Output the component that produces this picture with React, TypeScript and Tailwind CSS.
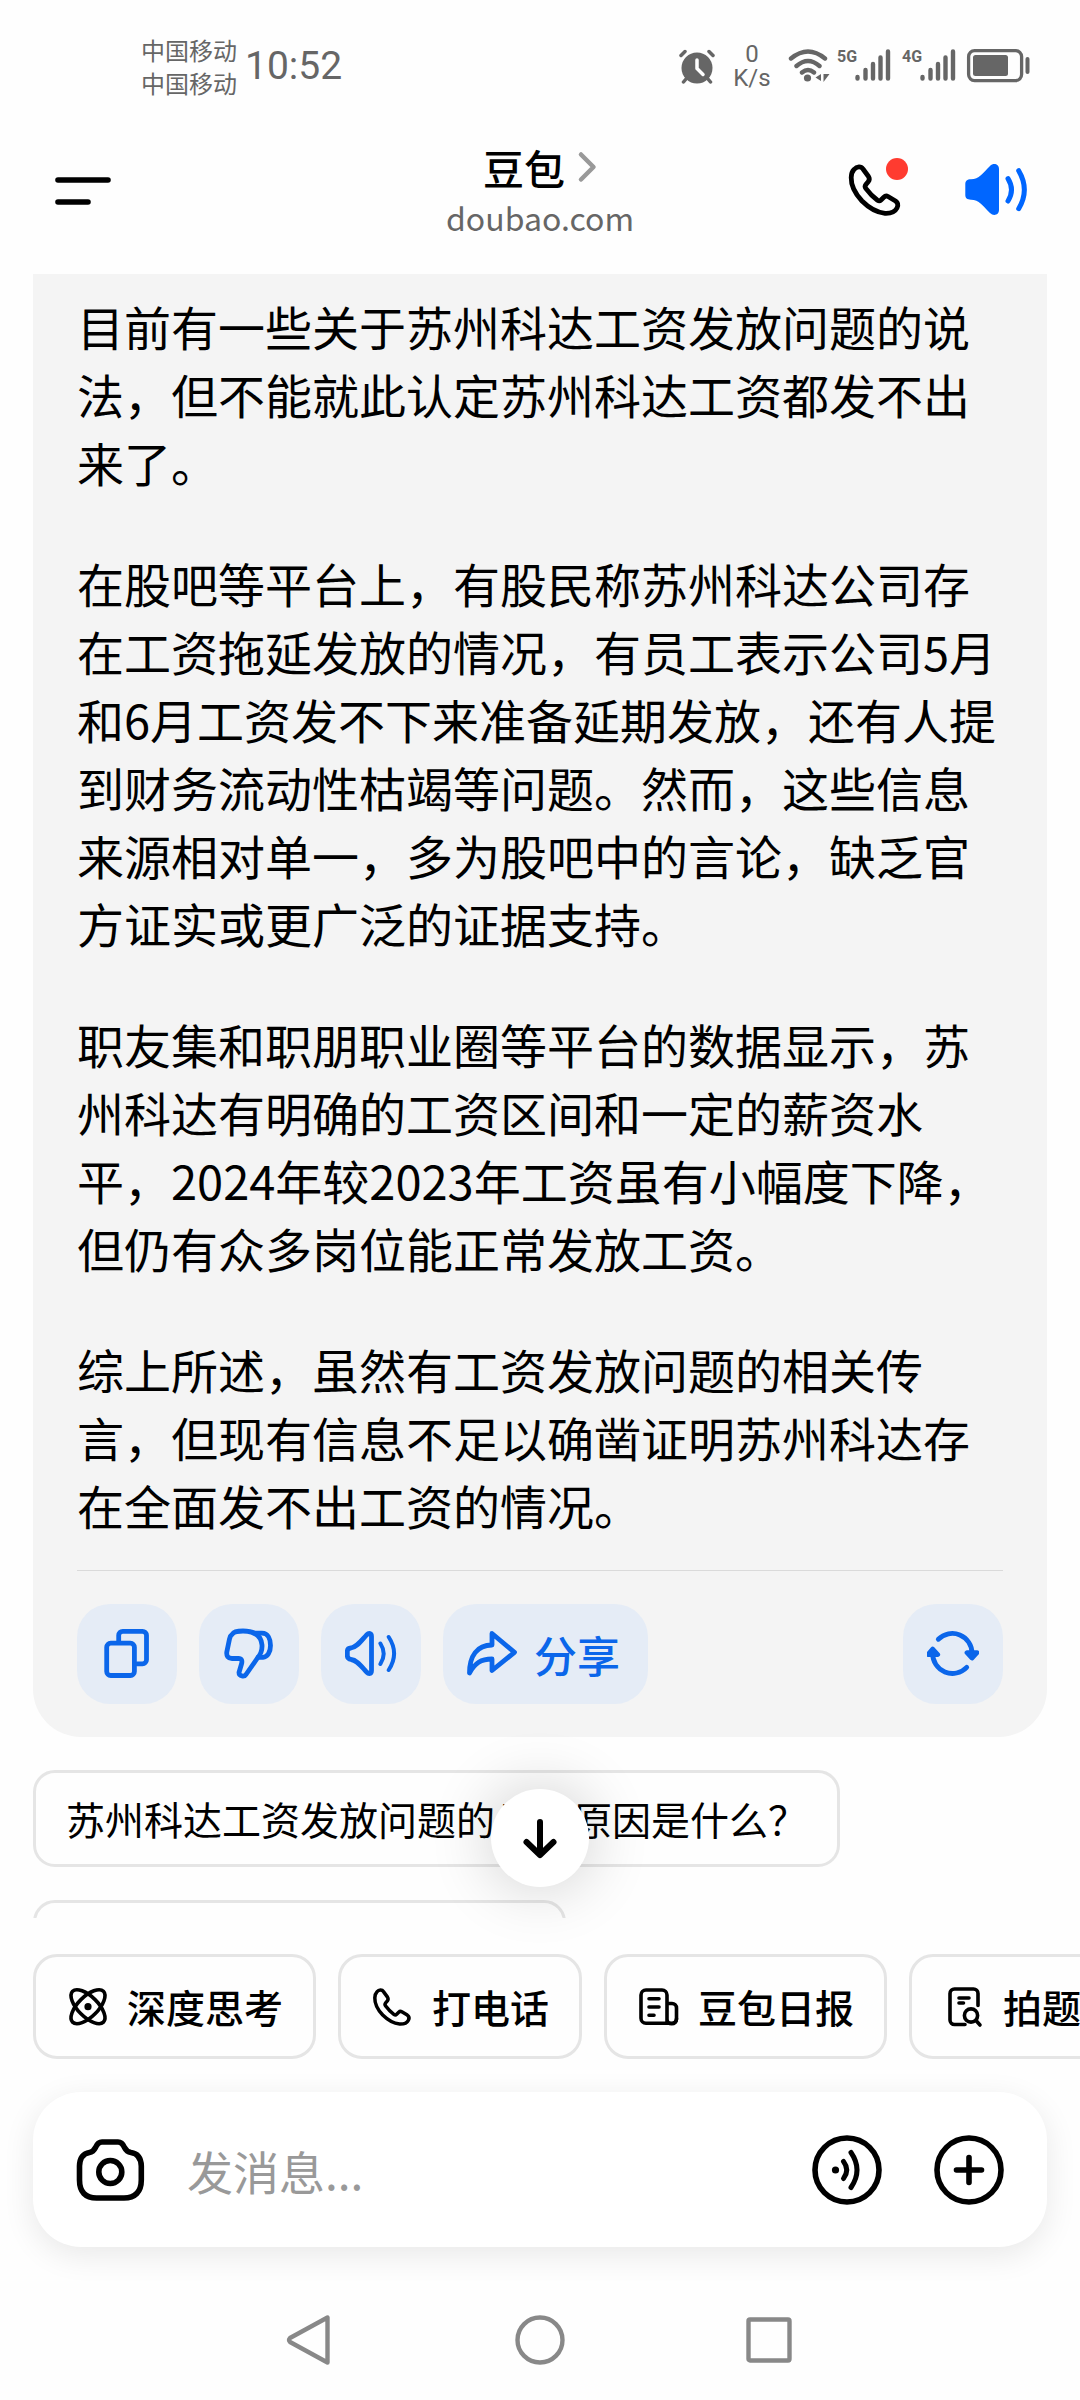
import { useState, ReactElement, ReactNode } from "react";

const paragraphs = [
  "目前有一些关于苏州科达工资发放问题的说法，但不能就此认定苏州科达工资都发不出来了。",
  "在股吧等平台上，有股民称苏州科达公司存在工资拖延发放的情况，有员工表示公司5月和6月工资发不下来准备延期发放，还有人提到财务流动性枯竭等问题。然而，这些信息来源相对单一，多为股吧中的言论，缺乏官方证实或更广泛的证据支持。",
  "职友集和职朋职业圈等平台的数据显示，苏州科达有明确的工资区间和一定的薪资水平，2024年较2023年工资虽有小幅度下降，但仍有众多岗位能正常发放工资。",
  "综上所述，虽然有工资发放问题的相关传言，但现有信息不足以确凿证明苏州科达存在全面发不出工资的情况。",
];

const stroke = {
  fill: "none",
  stroke: "currentColor",
  strokeLinecap: "round" as const,
  strokeLinejoin: "round" as const,
};

function PhoneIcon({ className }: { className: string }) {
  return (
    <svg viewBox="0 0 60 60" className={className} {...stroke} strokeWidth={4.8}>
      <path d="M8 9.5C11 6 15 6 17 9L22.5 16.5C23.8 18.5 23.5 20 22.3 21.7L20 24.3C18.8 25.8 19 27.5 20 28.7C23.5 33.5 27 37 31.5 40.3C33 41.3 34 41 35 40L37.8 37.2C39 36 40.5 35.7 42 36.5L49.5 41C52 42.8 52.3 45.5 51 48C49 52 44 53.5 39 53.3C31 52.5 23 48 16 41C9 33.5 5 25 5.2 17.5C5.3 14 6 11.5 8 9.5Z" />
    </svg>
  );
}

function SignalBars({ label }: { label: string }) {
  return (
    <div className="flex items-start">
      <span className="w-[18px] font-[Roboto] text-[16px] leading-[18px] font-bold">{label}</span>
      <svg viewBox="0 0 36 36" className="size-9" {...stroke} strokeWidth={4.4}>
        <path d="M2.5 29v1.5M10.5 22v8.5M18 16v14.5M25.5 9.5v21M33 3.5v27" />
      </svg>
    </div>
  );
}

function StatusBar() {
  return (
    <div className="flex h-[106px] items-center justify-between pt-[32px] pr-[48px] pb-[6px] pl-[141px] text-[#666]">
      <div className="flex items-center gap-2">
        <div className="text-[24px] leading-[33px]">
          <p>中国移动</p>
          <p>中国移动</p>
        </div>
        <span className="font-[Roboto] text-[39px] leading-[48px]">10:52</span>
      </div>
      <div className="flex items-center">
        <svg viewBox="0 0 38 36" className="h-9 w-[38px]" {...stroke} strokeWidth={3.5}>
          <circle cx="19" cy="20" r="15.5" fill="currentColor" stroke="none" />
          <path d="M3 7.5l4-4M35 7.5l-4-4M8 31l-2.5 3M30 31l2.5 3" />
          <path d="M19 12v8.5l6 6" stroke="#fff" />
        </svg>
        <div className="ml-4 w-[40px] text-center font-[Roboto] text-[24px] leading-[24px]">
          <p>0</p>
          <p>K/s</p>
        </div>
        <svg viewBox="0 0 42 36" className="ml-4 h-9 w-[42px]" {...stroke} strokeWidth={4.4}>
          <path d="M3 10.5Q20 -3.500 37 10.500M8.500 18Q20 8 31.500 18M14 24.500Q20 19.500 26 24.500" />
          <circle cx="19.5" cy="30" r="3.6" fill="currentColor" stroke="none" />
          <path d="M33 26v7l-5.5-3.5zM35.5 26h6l-6 8z" fill="currentColor" stroke="none" />
        </svg>
        <div className="ml-[7px] flex gap-[11px]">
          <SignalBars label="5G" />
          <SignalBars label="4G" />
        </div>
        <svg viewBox="0 0 66 36" className="ml-[10px] h-9 w-[66px]" fill="currentColor">
          <rect x="2.6" y="2.6" width="53" height="30" rx="6" fill="none" stroke="currentColor" strokeWidth="3.3" />
          <rect x="7" y="7" width="35" height="21" rx="2.5" />
          <rect x="59.5" y="9" width="4" height="17" rx="2" />
        </svg>
      </div>
    </div>
  );
}

function Header() {
  return (
    <header className="flex h-[168px] items-start justify-between px-[51px] pt-[33px]">
      <button type="button" aria-label="菜单" className="mt-[21px] flex flex-1">
        <svg viewBox="0 0 64 60" className="h-[60px] w-16" {...stroke} strokeWidth={5.6}>
          <path d="M7 20h50M7 42h30" />
        </svg>
      </button>
      <div className="flex flex-col items-center">
        <a href="#profile" className="flex items-center gap-[12px] text-[41px] leading-[56px] font-medium text-black">
          豆包
          <svg viewBox="0 0 20 32" className="h-8 w-5 text-[#999]" {...stroke} strokeWidth={4.5}>
            <path d="M4 3.5l12.5 12.5L4 28.5" />
          </svg>
        </a>
        <p className="text-[32px] leading-[44px] text-[#666]">doubao.com</p>
      </div>
      <div className="mt-[21px] flex flex-1 justify-end gap-14">
        <button type="button" aria-label="打电话" className="relative">
          <PhoneIcon className="size-[60px]" />
          <span className="absolute -top-[2px] right-[-2px] size-[22px] rounded-full bg-[#ff3b30]" />
        </button>
        <button type="button" aria-label="朗读" className="text-[#06f]">
          <svg viewBox="0 0 67 60" className="h-[60px] w-[67px]" {...stroke} strokeWidth={5}>
            <path
              d="M9 19.3C17 19.3 21 13 28 6C31.5 2.5 37 4 37 9V50C37 55 31.5 56.5 28 53C21 46 17 39.7 9 39.7C5 39.5 3.3 38 3.3 35V24C3.3 21 5 19.4 9 19.3Z"
              fill="currentColor"
              stroke="none"
            />
            <path d="M46 18.7Q53 29.8 46 41M56.7 10.7Q68 29.8 56.7 48.7" />
          </svg>
        </button>
      </div>
    </header>
  );
}

function ActionButton({ label, children }: { label: string; children: ReactNode }) {
  return (
    <button
      type="button"
      aria-label={label}
      className="flex size-[100px] items-center justify-center rounded-[33px] bg-[#e5ecf6]"
    >
      <svg viewBox="0 0 52 52" className="size-[52px]" {...stroke} strokeWidth={4.8}>
        {children}
      </svg>
    </button>
  );
}

function Answer() {
  return (
    <article className="mx-[33px] rounded-b-[48px] bg-[#f4f4f4] px-[44px] pt-[18px] pb-[33px]">
      <div className="space-y-[53px] text-[47px] leading-[68px] text-black">
        {paragraphs.map((p) => (
          <p key={p}>{p}</p>
        ))}
      </div>
      <div className="mt-[31px] flex gap-[22px] border-t border-[#dadada] pt-[33px] text-[#0b66ea]">
        <ActionButton label="复制">
          <rect x="5.7" y="15.2" width="27.7" height="32.3" rx="4" />
          <path d="M17.7 13V7.3a4 4 0 0 1 4-4H41.5a4 4 0 0 1 4 4V31.8a4 4 0 0 1-4 4H36" />
        </ActionButton>
        <ActionButton label="不喜欢">
          <path d="M9.5 6C10.5 4 14 3 20 3C32 3 38 8 39 17C39.3 22 38 26 34.5 30L23 46.5C21.5 49 16 48.5 16 44.5L18.5 36C19.5 32.5 18.5 30.5 15.5 30.5H9C5 30.5 3.3 28 3.8 24L6.5 11C7 8.5 8 7 9.5 6Z" />
          <path d="M31 5.2H39C45 5.2 47.5 11 47.5 17.5C47.5 24 44.5 29 40 29.3H35" />
        </ActionButton>
        <ActionButton label="朗读">
          <path d="M6 20C12 19 16 13 21.5 7C24 4.5 26.5 5 26.5 8.5V42.5C26.5 46 24 46.5 21.5 44C16 38 12 32 6 31.5C3 31 2.3 29.5 2.3 27.5V23.5C2.3 21.5 3 20.2 6 20Z" />
          <path d="M35.4 15.5Q42 25.7 35.4 36M43.7 9Q54.5 25.5 43.7 42" strokeWidth={4} />
        </ActionButton>
        <button
          type="button"
          className="flex h-[100px] items-center gap-4 rounded-[33px] bg-[#e5ecf6] pr-7 pl-[23px] text-[43px] font-medium"
        >
          <svg viewBox="0 0 52 52" className="size-[52px]" {...stroke} strokeWidth={4.8}>
            <path d="M26 5.5L48.5 24.3L26 42.5V31C15 31 9 35 3.5 45C3.5 28 11 17 26 17Z" />
          </svg>
          分享
        </button>
        <div className="ml-auto">
          <ActionButton label="重新生成">
            <path d="M11.3 11.3A19.7 19.7 0 0 1 45 25.3M39.7 39.3A19.7 19.7 0 0 1 5.7 25.3" />
            <path d="M40 24.7h10l-5 5.3zM1 26.5l4.7-5.5l5 5.5z" fill="currentColor" />
          </ActionButton>
        </div>
      </div>
    </article>
  );
}

function QuickAction({ label, icon }: { label: string; icon: ReactNode }) {
  return (
    <button
      type="button"
      className="flex h-[105px] shrink-0 items-center gap-[17px] rounded-3xl border-3 border-[#e5e5e5] px-[30px] text-[39px] font-medium text-black"
    >
      {icon}
      {label}
    </button>
  );
}

export default function App(): ReactElement {
  const [message, setMessage] = useState("");

  return (
    <div
      lang="zh-CN"
      className="flex h-screen flex-col overflow-hidden bg-[#fefefe] font-['Noto_Sans_CJK_SC',sans-serif] text-black"
    >
      <StatusBar />
      <Header />

      <main className="relative min-h-0 flex-1">
        <div className="h-full overflow-hidden">
          <Answer />
          <div className="mt-[33px] flex flex-col items-start gap-[33px] px-[33px]">
            <button
              type="button"
              className="flex h-[97px] items-center rounded-[22px] border-3 border-[#e5e5e5] px-[30px] text-[39px]"
            >
              苏州科达工资发放问题的具体原因是什么？
            </button>
            <button
              type="button"
              aria-label="更多问题"
              className="h-[97px] w-[533px] rounded-[22px] border-3 border-[#e5e5e5]"
            />
          </div>
        </div>
        <button
          type="button"
          aria-label="回到底部"
          className="absolute bottom-[31px] left-1/2 flex size-[98px] -translate-x-1/2 items-center justify-center rounded-full bg-white shadow-[0_0_64px_rgba(0,0,0,0.2)]"
        >
          <svg viewBox="0 0 40 44" className="h-11 w-10" {...stroke} strokeWidth={6}>
            <path d="M20 6v32M6.5 26L20 39l13.5-13" />
          </svg>
        </button>
      </main>

      <footer className="pt-[36px]">
        <div className="flex gap-[22px] overflow-hidden pl-[33px]">
          <QuickAction
            label="深度思考"
            icon={
              <svg viewBox="0 0 44 44" className="size-11" {...stroke} strokeWidth={3.6}>
                <ellipse cx="22" cy="21.7" rx="21.8" ry="10" transform="rotate(45 22 21.7)" />
                <ellipse cx="22" cy="21.7" rx="21.8" ry="10" transform="rotate(-45 22 21.7)" />
                <circle cx="22" cy="21.7" r="3.6" fill="currentColor" stroke="none" />
              </svg>
            }
          />
          <QuickAction label="打电话" icon={<PhoneIcon className="size-11" />} />
          <QuickAction
            label="豆包日报"
            icon={
              <svg viewBox="0 0 44 44" className="size-11" {...stroke} strokeWidth={3.6}>
                <path d="M30 38.3H9a5 5 0 0 1-5-5V10a5 5 0 0 1 5-5H25a5 5 0 0 1 5 5V38.3M30 18.5H35a4.5 4.5 0 0 1 4.5 4.5V34a4.3 4.3 0 0 1-9.500 0" />
                <path d="M30 38.3H35a4.5 4.5 0 0 0 4.5-4.5M12 13.7h10M12 22h10M12 30.3h5" />
              </svg>
            }
          />
          <QuickAction
            label="拍题答疑"
            icon={
              <svg viewBox="0 0 44 44" className="size-11" {...stroke} strokeWidth={3.6}>
                <path d="M23 39.5H12.5a4.5 4.5 0 0 1-4.500-4.500V8.500A4.500 4.500 0 0 1 12.500 4H31.500A4.500 4.500 0 0 1 36 8.500V20.500M17 13h10M17 18h4.500" />
                <path d="M34 35.5l4 4.5" />
                <circle cx="29" cy="30.5" r="6.6" />
              </svg>
            }
          />
        </div>

        <form
          onSubmit={(e) => e.preventDefault()}
          className="mx-[33px] mt-[33px] flex h-[155px] items-center rounded-[48px] bg-white pr-[43px] pl-[42px] shadow-[0_8px_32px_rgba(0,0,0,0.09)]"
        >
          <button type="button" aria-label="拍照">
            <svg viewBox="0 0 70 70" className="size-[70px]" {...stroke} strokeWidth={5.6}>
              <path d="M27 7H43C46.5 7 48 9 49.5 12.5C51 15.5 53 17 56 17.5C63 18.5 66 23 66.3 31V45C66.3 57 60 63 49 63H21.5C10.5 63 4.5 57 4.5 45V31C4.8 23 8 18.5 14.5 17.5C17.5 17 19 15.5 20.5 12.5C22 9 23.5 7 27 7Z" />
              <circle cx="35.3" cy="37" r="11.5" />
            </svg>
          </button>
          <input
            type="text"
            aria-label="发消息"
            placeholder="发消息..."
            value={message}
            onChange={(e) => setMessage(e.target.value)}
            className="ml-[42px] min-w-0 flex-1 text-[46px] leading-[68px] outline-none placeholder:text-[#999]"
          />
          <div className="flex gap-[52px]">
            <button type="button" aria-label="语音输入">
              <svg viewBox="0 0 70 70" className="size-[70px]" {...stroke} strokeWidth={5.6}>
                <circle cx="35" cy="35" r="32" />
                <circle cx="23.5" cy="35" r="3.6" fill="currentColor" stroke="none" />
                <path d="M31.5 26.5Q38 35 31.5 43.5M39 17.5Q51 35 39 52.5" strokeWidth={5} />
              </svg>
            </button>
            <button type="button" aria-label="更多">
              <svg viewBox="0 0 70 70" className="size-[70px]" {...stroke} strokeWidth={5.6}>
                <circle cx="35" cy="35" r="32" />
                <path d="M35 22.5v25M22.5 35h25" />
              </svg>
            </button>
          </div>
        </form>

        <nav className="flex h-[153px] items-center justify-center gap-[180px] pt-8 text-[#888]">
          <button type="button" aria-label="返回">
            <svg viewBox="0 0 50 54" className="h-[54px] w-[50px]" {...stroke} strokeWidth={4.4}>
              <path d="M42.5 4.5V49.5L5 29Q3 27 5 25Z" />
            </svg>
          </button>
          <button type="button" aria-label="主页">
            <svg viewBox="0 0 50 54" className="h-[54px] w-[50px]" {...stroke} strokeWidth={4.4}>
              <circle cx="25" cy="27" r="22.5" />
            </svg>
          </button>
          <button type="button" aria-label="最近任务">
            <svg viewBox="0 0 50 54" className="h-[54px] w-[50px]" {...stroke} strokeWidth={4.4}>
              <rect x="3.5" y="6.5" width="41" height="41" rx="1.5" />
            </svg>
          </button>
        </nav>
      </footer>
    </div>
  );
}
